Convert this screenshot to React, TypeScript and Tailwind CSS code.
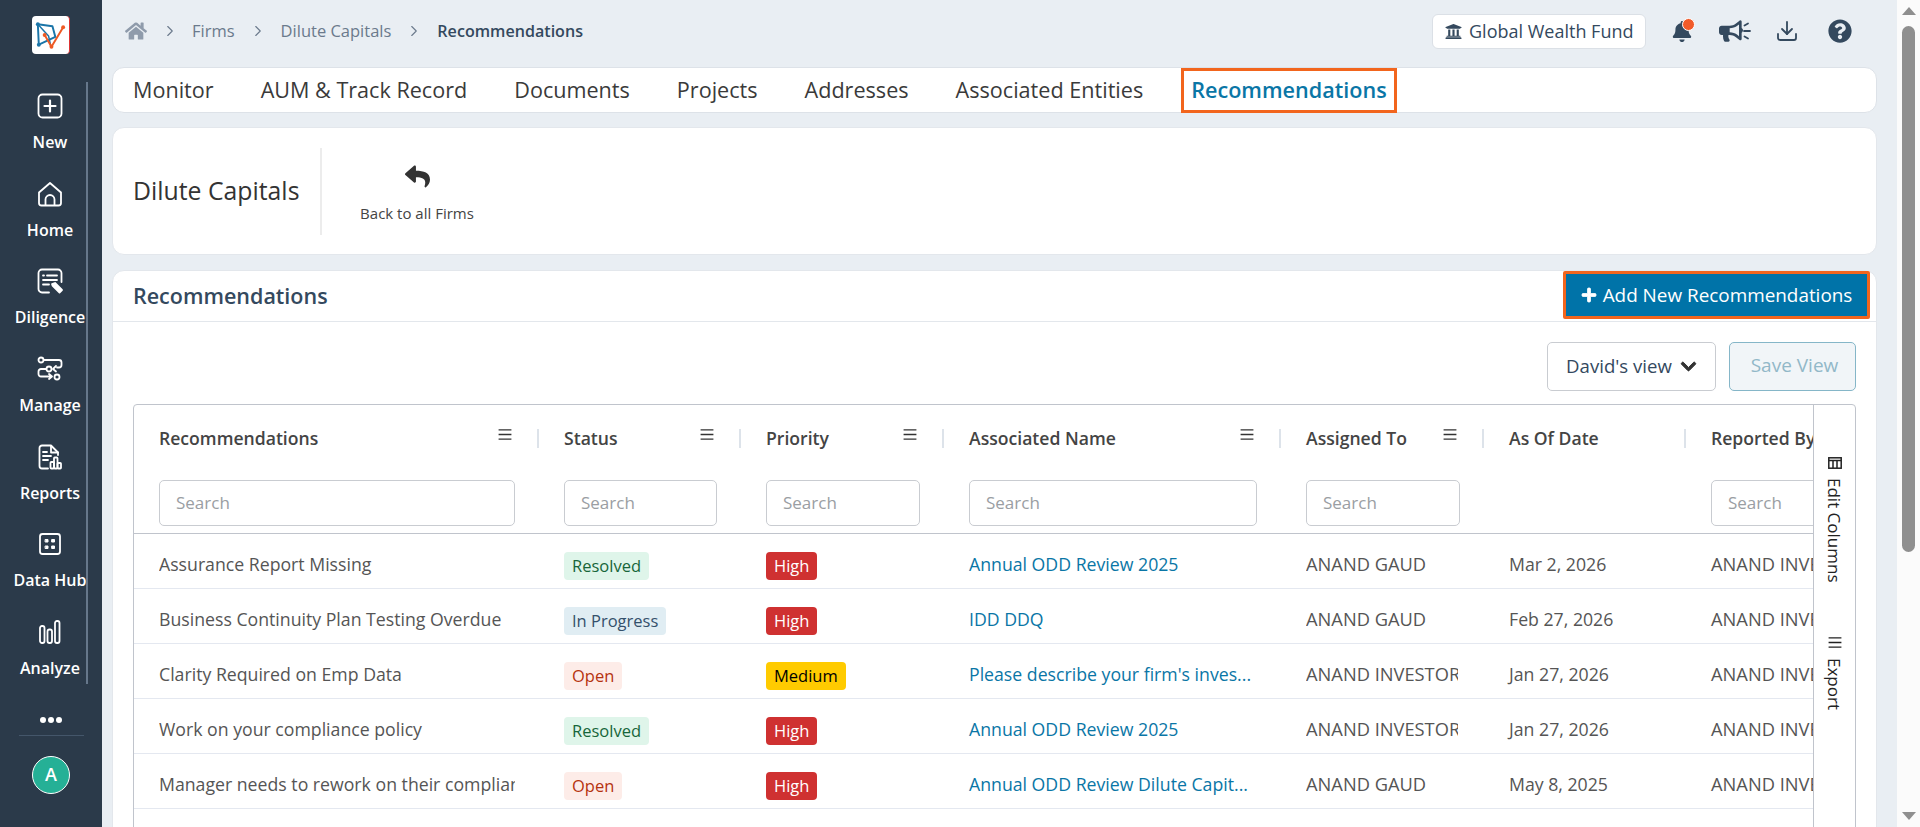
import { ReactNode } from "react";
import { FaBell, FaBullhorn, FaChevronDown, FaHome, FaPlus, FaQuestionCircle, FaReply, FaUniversity } from "react-icons/fa";
import { ChevronRight, Download } from "lucide-react";

const tabs = ["Monitor", "AUM & Track Record", "Documents", "Projects", "Addresses", "Associated Entities"];

function Icon({ children }: { children: ReactNode }) {
  return (
    <svg viewBox="0 0 28 28" fill="none" stroke="currentColor" strokeWidth="1.8" strokeLinecap="round" strokeLinejoin="round" className="h-7 w-7">
      {children}
    </svg>
  );
}

const navItems: { label: string; icon: ReactNode }[] = [
  {
    label: "New",
    icon: (
      <Icon>
        <rect x="2.5" y="2.5" width="23" height="23" rx="4" />
        <path d="M14 8.5v11M8.5 14h11" strokeWidth="2.2" />
      </Icon>
    ),
  },
  {
    label: "Home",
    icon: (
      <Icon>
        <path d="M3 12.5 14 3l11 9.5V23a2.5 2.5 0 0 1-2.5 2.5h-17A2.5 2.5 0 0 1 3 23z" />
        <path d="M9.5 25v-5.5a4.5 4.5 0 0 1 9 0V25" />
      </Icon>
    ),
  },
  {
    label: "Diligence",
    icon: (
      <Icon>
        <path d="M13 25.5H6A3.5 3.5 0 0 1 2.5 22V6A3.5 3.5 0 0 1 6 2.5h16A3.5 3.5 0 0 1 25.5 6v9" />
        <path d="M7 8.5h1M11 8.5h10M7 13h14M7 17.5h6" />
        <path d="m16 17 3-1 7 7-2.5 2.5-7-7z" fill="currentColor" />
      </Icon>
    ),
  },
  {
    label: "Manage",
    icon: (
      <Icon>
        <circle cx="5" cy="5" r="2.5" />
        <path d="M8 5h15a2.5 2.5 0 0 1 2.5 2.5V10a2.5 2.5 0 0 1-2.5 2.5h-2" />
        <circle cx="13" cy="14" r="2.5" />
        <path d="M10 14H5a2.5 2.5 0 0 0-2.5 2.5V19A2.5 2.5 0 0 0 5 21.5h11M13 19l3 2.5-3 2.5M20 11l-3 3 3 2.5" />
        <circle cx="21" cy="22" r="2.5" />
      </Icon>
    ),
  },
  {
    label: "Reports",
    icon: (
      <Icon>
        <path d="M12 25.5H6A2.5 2.5 0 0 1 3.5 23V5A2.5 2.5 0 0 1 6 2.5h9l7 7V12" />
        <path d="M15 3v6.5h7M7 9h4M7 13h8M7 17h5" />
        <rect x="14.5" y="19" width="3.5" height="6.5" rx=".8" />
        <rect x="18" y="14.5" width="3.5" height="11" rx=".8" />
        <rect x="21.5" y="20" width="3.5" height="5.5" rx=".8" />
      </Icon>
    ),
  },
  {
    label: "Data Hub",
    icon: (
      <Icon>
        <rect x="4" y="4" width="20" height="20" rx="2.5" />
        <path d="M9.5 9.5H12V12H9.5zM16 9.5h2.5V12H16zM9.5 16H12v2.5H9.5zM16 16h2.5v2.5H16z" fill="currentColor" strokeWidth="1" />
      </Icon>
    ),
  },
  {
    label: "Analyze",
    icon: (
      <Icon>
        <rect x="4" y="8" width="4.5" height="17" rx="2" />
        <rect x="11.5" y="11.5" width="4.5" height="13.5" rx="2" />
        <rect x="19" y="3" width="4.5" height="22" rx="2" />
      </Icon>
    ),
  },
];

const columns = [
  { title: "Recommendations", w: "w-[405px]", search: "w-[356px]", menu: true, sep: true },
  { title: "Status", w: "w-[202px]", search: "w-[153px]", menu: true, sep: true },
  { title: "Priority", w: "w-[203px]", search: "w-[154px]", menu: true, sep: true },
  { title: "Associated Name", w: "w-[337px]", search: "w-[288px]", menu: true, sep: true },
  { title: "Assigned To", w: "w-[203px]", search: "w-[154px]", menu: true, sep: true },
  { title: "As Of Date", w: "w-[202px]", search: "", menu: false, sep: true },
  { title: "Reported By", w: "w-[203px]", search: "w-[154px]", menu: false, sep: false },
];

const statusStyles: Record<string, string> = {
  Resolved: "bg-[#dff5ea] text-[#17663a]",
  "In Progress": "bg-[#e0edf3] text-[#34506b]",
  Open: "bg-[#fdece8] text-[#b5330f]",
};

const priorityStyles: Record<string, string> = {
  High: "bg-[#cf3131] text-white",
  Medium: "bg-[#ffcb00] text-black",
};

const rows = [
  { name: "Assurance Report Missing", status: "Resolved", priority: "High", assoc: "Annual ODD Review 2025", to: "ANAND GAUD", date: "Mar 2, 2026" },
  { name: "Business Continuity Plan Testing Overdue", status: "In Progress", priority: "High", assoc: "IDD DDQ", to: "ANAND GAUD", date: "Feb 27, 2026" },
  { name: "Clarity Required on Emp Data", status: "Open", priority: "Medium", assoc: "Please describe your firm's inves...", to: "ANAND INVESTOR", date: "Jan 27, 2026" },
  { name: "Work on your compliance policy", status: "Resolved", priority: "High", assoc: "Annual ODD Review 2025", to: "ANAND INVESTOR", date: "Jan 27, 2026" },
  { name: "Manager needs to rework on their compliance policy", status: "Open", priority: "High", assoc: "Annual ODD Review Dilute Capit...", to: "ANAND GAUD", date: "May 8, 2025" },
];

function Logo() {
  return (
    <div className="flex h-[38px] w-[38px] items-center justify-center rounded-[4px] border-r border-r-[#d33] bg-white">
      <svg viewBox="0 0 38 38" className="h-[38px] w-[38px]" fill="none" strokeLinecap="round" strokeLinejoin="round">
        <path d="M6 8 21 10 24 21 7 29Z" stroke="#1b75a8" strokeWidth="2" />
        <path d="M6 8 17 20 19 29" stroke="#1b75a8" strokeWidth="1.5" />
        <path d="M13 19 20 31 32 11" stroke="#ee5a24" strokeWidth="2" />
        <circle cx="13" cy="19" r="2" fill="#ee5a24" />
        <circle cx="20" cy="31" r="2" fill="#ee5a24" />
        <circle cx="32" cy="11" r="2" fill="#ee5a24" />
        <circle cx="6" cy="8" r="2" fill="#1b75a8" />
        <circle cx="7" cy="29" r="2" fill="#1b75a8" />
      </svg>
    </div>
  );
}

function Sidebar() {
  return (
    <aside className="flex h-full w-[102px] shrink-0 flex-col items-center bg-[#2b3a4a] text-white">
      <div className="mt-4 flex w-full justify-center">
        <Logo />
      </div>
      <div className="relative mt-[28px] w-full">
        <div className="absolute left-[86px] top-0 h-[602px] w-[2px] bg-[#66778b]" />
        <nav className="flex flex-col pr-[2px]">
          {navItems.map((item) => (
            <div key={item.label} className="flex h-[87.7px] flex-col items-center pt-[10px]">
              {item.icon}
              <span className="mt-[12px] text-[16px] leading-5 font-semibold whitespace-nowrap">{item.label}</span>
            </div>
          ))}
        </nav>
      </div>
      <div className="mt-[21px] flex gap-[2px]">
        <span className="h-[6px] w-[6px] rounded-full bg-white" />
        <span className="h-[6px] w-[6px] rounded-full bg-white" />
        <span className="h-[6px] w-[6px] rounded-full bg-white" />
      </div>
      <div className="mt-[12px] h-px w-[65px] bg-[#44566a]" />
      <div className="mt-[20px] flex h-[38px] w-[38px] items-center justify-center rounded-full border border-white bg-[#25b096] text-[18px] font-semibold">
        A
      </div>
    </aside>
  );
}

function TopBar() {
  return (
    <header className="flex h-[67px] items-center justify-between pr-[25px] pb-[5px]">
      <div className="flex items-center text-[16.5px] text-[#6b7a8c]">
        <FaHome className="ml-[13px] h-[20px] w-[22px] text-[#8f9bab]" />
        <ChevronRight className="ml-[14px] h-[18px] w-[18px] stroke-[1.5]" />
        <span className="ml-[13px]">Firms</span>
        <ChevronRight className="ml-[14px] h-[18px] w-[18px] stroke-[1.5]" />
        <span className="ml-[14px]">Dilute Capitals</span>
        <ChevronRight className="ml-[14px] h-[18px] w-[18px] stroke-[1.5]" />
        <span className="ml-[14px] text-[16.1px] font-semibold text-[#34495e]">Recommendations</span>
      </div>
      <div className="flex items-center text-[#34495e]">
        <div className="flex h-[35px] w-[214px] items-center gap-[7px] rounded-[6px] border border-[#dbe0e6] bg-white pl-[12px] text-[18px]">
          <FaUniversity className="h-[17px] w-[17px]" />
          <span>Global Wealth Fund</span>
        </div>
        <div className="relative ml-[26px]">
          <FaBell className="h-[21px] w-[20px]" />
          <span className="absolute -right-[3px] -top-[3px] h-[13px] w-[13px] rounded-full border border-white bg-[#f15a29]" />
        </div>
        <FaBullhorn className="ml-[27px] h-[24px] w-[24px]" />
        <svg viewBox="0 0 8 18" className="h-[18px] w-[8px]" stroke="currentColor" strokeWidth="1.8" strokeLinecap="round">
          <path d="M1.5 3.5 5 1.5M1 9h6M1.5 14.5 5 16.5" />
        </svg>
        <Download className="ml-[24px] h-[24px] w-[24px] stroke-[1.8]" />
        <FaQuestionCircle className="ml-[29px] h-[24px] w-[24px]" />
      </div>
    </header>
  );
}

function MenuLines() {
  return (
    <svg viewBox="0 0 14 12" className="h-[11px] w-[14px]" stroke="#333" strokeWidth="1.5">
      <path d="M0 1h14M0 6h14M0 11h14" />
    </svg>
  );
}

function RecommendationsTable() {
  return (
    <div className="flex h-[600px] rounded-[4px] border border-[#c0c4cc]">
      <div className="min-w-0 flex-1 overflow-hidden">
        <div className="flex h-[129px] w-max border-b border-[#c0c4cc]">
          {columns.map((col) => (
            <div key={col.title} className={`${col.w} relative shrink-0 pl-[25px]`}>
              <div className="pt-[21px] text-[17.6px] leading-[24px] font-semibold whitespace-nowrap text-[#444]">{col.title}</div>
              {col.menu && (
                <div className="absolute right-[27px] top-[24px]">
                  <MenuLines />
                </div>
              )}
              {col.sep && <div className="absolute right-0 top-[24px] h-[19px] w-[2px] bg-[#dde3ea]" />}
              {col.search && (
                <div className={`${col.search} mt-[30px] flex h-[46px] items-center rounded-[5px] border border-[#c9ccd1] pl-[16px] text-[17px] text-[#9a9ea3]`}>
                  Search
                </div>
              )}
            </div>
          ))}
        </div>
        {rows.map((row) => (
          <div key={row.name} className="flex h-[55px] w-max items-center border-b border-[#e4e8f0] pt-[6px] text-[17.7px] text-[#555]">
            <div className="w-[405px] shrink-0 pl-[25px]">
              <div className="w-[356px] overflow-hidden whitespace-nowrap">{row.name}</div>
            </div>
            <div className="w-[202px] shrink-0 pl-[25px]">
              <span className={`mt-[4px] inline-block h-[28px] rounded-[4px] px-2 text-[16.5px] leading-[28px] ${statusStyles[row.status]}`}>{row.status}</span>
            </div>
            <div className="w-[203px] shrink-0 pl-[25px]">
              <span className={`mt-[4px] inline-block h-[28px] rounded-[4px] px-2 text-[16.5px] leading-[28px] font-medium ${priorityStyles[row.priority]}`}>{row.priority}</span>
            </div>
            <div className="w-[337px] shrink-0 pl-[25px] text-[#0a76a6]">{row.assoc}</div>
            <div className="w-[203px] shrink-0 pl-[25px] text-[18.3px]">
              <div className="w-[152px] overflow-hidden whitespace-nowrap">{row.to}</div>
            </div>
            <div className="w-[202px] shrink-0 pl-[25px]">{row.date}</div>
            <div className="w-[203px] shrink-0 pl-[25px] text-[18.3px] whitespace-nowrap">ANAND INVESTOR</div>
          </div>
        ))}
      </div>
      <div className="flex w-[42px] shrink-0 flex-col items-center border-l border-[#c0c4cc] pt-[52px] text-[17px] text-[#222]">
        <svg viewBox="0 0 14 12" className="h-[12px] w-[14px]" fill="none" stroke="#222" strokeWidth="1.5">
          <rect x=".8" y=".8" width="12.4" height="10.4" />
          <path d="M.8 3.5h12.4M5 3.5V11M9 3.5V11" />
        </svg>
        <span className="mt-[9px] [writing-mode:vertical-rl]">Edit Columns</span>
        <svg viewBox="0 0 14 12" className="mt-[54px] h-[11px] w-[14px]" stroke="#222" strokeWidth="1.5">
          <path d="M0 1h14M0 6h14M0 11h14" />
        </svg>
        <span className="mt-[10px] [writing-mode:vertical-rl]">Export</span>
      </div>
    </div>
  );
}

function Scrollbar() {
  return (
    <div className="flex h-full w-[23px] shrink-0 flex-col items-center bg-[#fbfbfb]">
      <div className="mt-[7px] h-0 w-0 border-x-[7px] border-b-[8px] border-x-transparent border-b-[#8f8f8f]" />
      <div className="mt-[11px] h-[526px] w-[13px] rounded-full bg-[#8f8f8f]" />
      <div className="mt-auto mb-[7px] h-0 w-0 border-x-[7px] border-t-[8px] border-x-transparent border-t-[#8f8f8f]" />
    </div>
  );
}

export default function App() {
  return (
    <div className="flex h-screen overflow-hidden bg-[#e9eef3] font-['Open_Sans',sans-serif]">
      <Sidebar />
      <main className="min-w-0 flex-1 overflow-hidden pl-[10px] pr-[20px]">
        <TopBar />
        <div className="flex h-[46px] items-center gap-[47px] rounded-[12px] border border-[#dde2e8] bg-white pl-5 text-[21.6px] text-[#3a3a3a]">
          {tabs.map((tab) => (
            <span key={tab} className="whitespace-nowrap">{tab}</span>
          ))}
          <span className="-ml-[9px] mt-[1px] flex h-[45px] items-center border-[3px] border-[#f2651d] px-[7px] font-semibold whitespace-nowrap text-[#0a76a6]">
            Recommendations
          </span>
        </div>
        <div className="mt-[14px] flex h-[128px] items-center rounded-[12px] border border-[#e3e7ec] bg-white pl-5">
          <div className="flex h-[87px] w-[189px] items-center border-r-2 border-[#ececec] text-[24.8px] font-medium whitespace-nowrap text-[#333]">Dilute Capitals</div>
          <div className="flex w-[190px] flex-col items-center pt-[6px]">
            <FaReply className="h-[25px] w-[25px] text-[#333]" />
            <span className="mt-[13px] text-[15px] whitespace-nowrap text-[#444]">Back to all Firms</span>
          </div>
        </div>
        <section className="mt-[15px] rounded-t-[12px] border border-[#e3e7ec] bg-white">
          <div className="flex h-[51px] items-center justify-between border-b border-[#e3e7ec] pb-[2px] pl-5 pr-[6px]">
            <h2 className="mt-[2px] text-[21.5px] font-semibold text-[#34495e]">Recommendations</h2>
            <button className="flex h-[48px] w-[307px] items-center justify-center gap-[6px] rounded-[2px] border-[3px] border-[#f2651d] bg-[#0073a8] text-[18.9px] text-white">
              <FaPlus className="h-4 w-4 stroke-[25]" />
              Add New Recommendations
            </button>
          </div>
          <div className="px-5 pt-[20px]">
            <div className="flex justify-end gap-[13px]">
              <div className="flex h-[49px] w-[169px] items-center justify-center gap-2 rounded-[5px] border border-[#c9ccd1] pb-[1px] text-[18.6px] text-[#34495e]">
                David's view
                <FaChevronDown className="h-[17px] w-[17px] stroke-[30] text-[#333]" />
              </div>
              <div className="flex h-[49px] w-[127px] items-center justify-center rounded-[5px] border border-[#85b6c8] bg-[#f1f5f8] pb-[3px] pl-[4px] text-[19px] text-[#92b8c8]">
                Save View
              </div>
            </div>
            <div className="mt-[13px]">
              <RecommendationsTable />
            </div>
          </div>
        </section>
      </main>
      <Scrollbar />
    </div>
  );
}
